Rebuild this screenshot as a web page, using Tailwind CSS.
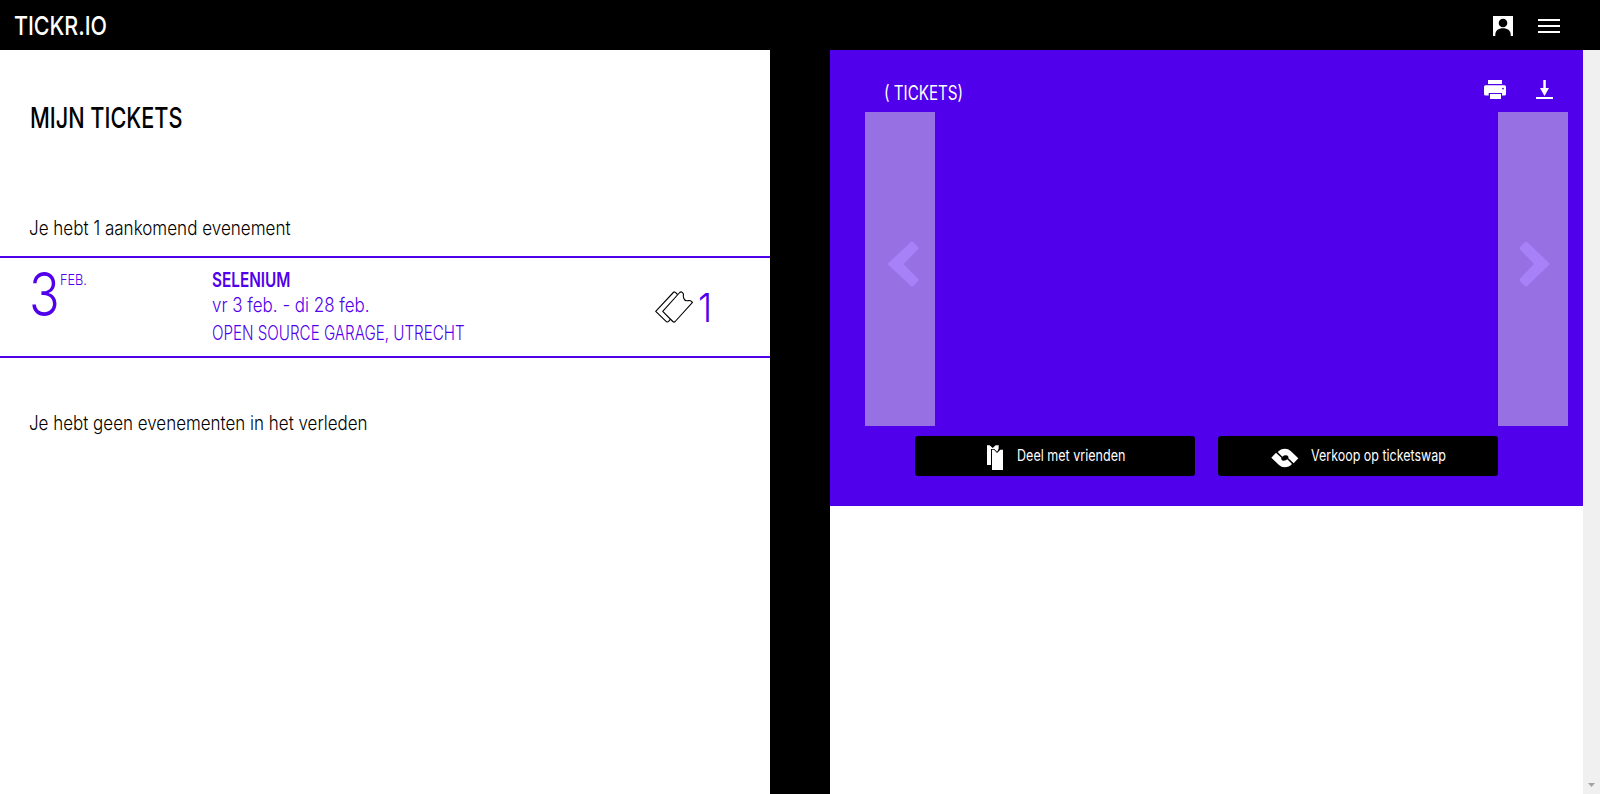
<!DOCTYPE html>
<html lang="nl">
<head>
<meta charset="utf-8">
<title>Mijn tickets</title>
<script src="https://cdn.jsdelivr.net/npm/@tailwindcss/browser@4"></script>
</head>
<body class="flex h-[794px] flex-col overflow-hidden bg-white font-['Inter',sans-serif] text-black whitespace-nowrap">
<header class="flex h-[50px] shrink-0 items-center bg-black pl-[14px] pr-10 text-white">
  <a class="mt-[2px] origin-left scale-x-[.825] text-[26px] font-medium leading-[48px]">TICKR.IO</a>
  <svg class="ml-auto mt-[2px]" width="20" height="20" viewBox="0 0 20 20"><rect width="20" height="20" fill="#fff"/><circle cx="10" cy="7" r="4.3"/><path d="M2.3 20V18.500C2.500 14.500 5.500 12.300 10 12.300s7.500 2.200 7.700 6.200V20z"/></svg>
  <svg class="ml-[25px] mt-[2px]" width="22" height="14" viewBox="0 0 22 14"><path d="M0 1h22M0 7h22M0 13h22" stroke="#fff" stroke-width="2"/></svg>
</header>
<div class="flex flex-1">
  <main class="w-[770px] shrink-0 text-[19.5px] font-light">
    <h1 class="ml-[30px] mt-[50px] w-fit origin-left scale-x-[.748] text-[29px] font-medium leading-9">MIJN TICKETS</h1>
    <p class="ml-[29px] mt-[80px] w-fit origin-left scale-x-[.874] leading-6">Je hebt 1 aankomend evenement</p>
    <section class="mt-[16px] flex h-[102px] border-y-2 border-[#5000eb] text-[#5000eb]">
      <div class="flex w-[212px] pl-[29px]">
        <span class="w-[31px] origin-left scale-x-[.83] text-[61px] leading-[73px]">3</span>
        <span class="mt-[12px] origin-left scale-x-[.85] text-[15px] leading-5">FEB.</span>
      </div>
      <div class="flex w-[442px] flex-col items-start pt-[10px]">
        <h2 class="origin-left scale-x-[.785] font-semibold leading-6">SELENIUM</h2>
        <span class="mt-px origin-left scale-x-[.87] leading-6">vr 3 feb. - di 28 feb.</span>
        <span class="mt-1 origin-left scale-x-[.777] leading-6">OPEN SOURCE GARAGE, UTRECHT</span>
      </div>
      <svg class="mt-[32px]" width="42" height="34" viewBox="654 290 42 34" fill="none" stroke="#000" stroke-width="1.100" stroke-linejoin="round"><path d="M679.700 292.500Q681 291.300 682.200 292.400L683.500 294C682.800 296.500 683.800 300.600 686.500 300.800C688.500 301 690 299.200 692.500 302.300L675.200 321.500Q674 322.600 672.800 321.500L662.700 311.300Z"/><path d="M677.500 294.500L675.700 292.600Q674.500 291.300 673.300 292.500L655.700 311.300L665.800 321.200Q667.300 322.700 668.600 321.400L670.300 319.300"/></svg>
      <span class="mt-[30px] ml-[2px] origin-left scale-x-[.9] text-[40px] leading-10">1</span>
    </section>
    <p class="ml-[29px] mt-[53px] w-fit origin-left scale-x-[.87] leading-6">Je hebt geen evenementen in het verleden</p>
  </main>
  <div class="w-[60px] shrink-0 bg-black"></div>
  <aside class="w-[753px] shrink-0">
    <div class="flex h-[456px] flex-col bg-[#5000eb] text-white">
      <div class="flex h-[62px] items-start pl-[54px] pr-[30px]">
        <h3 class="mt-[31px] origin-left scale-x-[.778] text-[19.500px] font-normal leading-6">( TICKETS)</h3>
        <svg class="ml-auto mt-[30px]" width="22" height="20" viewBox="0 0 22 20"><path d="M4 0h14v4H4zM1.500 5.300h19a1.500 1.500 0 0 1 1.500 1.500V14q0 1.500-1.500 1.500h-2.500V13H4.700v2.500H1.500q-1.500 0-1.500-1.500V6.800a1.500 1.500 0 0 1 1.500-1.500zM6 14h11v5H6z" fill="#fff"/><circle cx="19" cy="8.600" r=".9" fill="#5000eb"/></svg>
        <svg class="ml-[30px] mt-[30px]" width="17" height="19" viewBox="0 0 17 19"><path d="M7.300 0h2.500v8H13l-4.500 8L4 8h3.300zM0 17h17v2H0z" fill="#fff"/></svg>
      </div>
      <div class="flex h-[314px] justify-between pl-[35px] pr-[15px]">
        <div class="w-[70px] bg-[#9770e3]"><svg class="ml-[22px] mt-[128px]" width="34" height="48" viewBox="0 0 34 48"><path d="M2.500 24L25 3L30 8.200L14.500 24L30 40L25 45z" fill="#a781f8" stroke="#a781f8" stroke-width="3" stroke-linejoin="round"/></svg></div>
        <div class="w-[70px] bg-[#9770e3]"><svg class="ml-[20px] mt-[128px]" width="34" height="48" viewBox="0 0 34 48"><path d="M30 24L8 3L3 8.200L18 24L3 40L8 45z" fill="#a781f8" stroke="#a781f8" stroke-width="3" stroke-linejoin="round"/></svg></div>
      </div>
      <div class="mt-[10px] flex gap-[23px] pl-[85px] text-[15.500px]">
        <button class="flex h-10 w-[280px] items-center rounded-[3px] bg-black pl-[71px]">
          <svg class="mt-[3px] shrink-0" width="18" height="26" viewBox="258 104 54 78"><path d="M261 105h8l9 8 9-8h9v59h-35z" fill="#fff"/><path d="M273 116h10l8 8 9-15h9v71h-36z" fill="#000"/><path d="M276 118h6l9 10 10-10h8v61h-33z" fill="#fff"/></svg>
          <span class="ml-[13px] origin-left scale-x-[.81] leading-10">Deel met vrienden</span>
        </button>
        <button class="flex h-10 w-[280px] items-center rounded-[3px] bg-black pl-[53px]">
          <svg class="mt-[3px] shrink-0" width="28" height="20" viewBox="212 111 84 60" fill="#fff"><path id="lobe" d="M232 123Q241 113 254 113Q264 113 271 120L294 142L280 157L264 142Q266 134 257 133Q250 133 246 137Z"/><use href="#lobe" transform="rotate(180 253.500 141)"/></svg>
          <span class="ml-[12px] origin-left scale-x-[.805] leading-10">Verkoop op ticketswap</span>
        </button>
      </div>
    </div>
  </aside>
  <div class="flex flex-1 items-end justify-center bg-[#f0f0f0] pb-[7px]"><svg width="7" height="4" viewBox="0 0 7 4"><path d="M0 0h7L3.500 4z" fill="#a3a3a3"/></svg></div>
</div>
</body>
</html>
